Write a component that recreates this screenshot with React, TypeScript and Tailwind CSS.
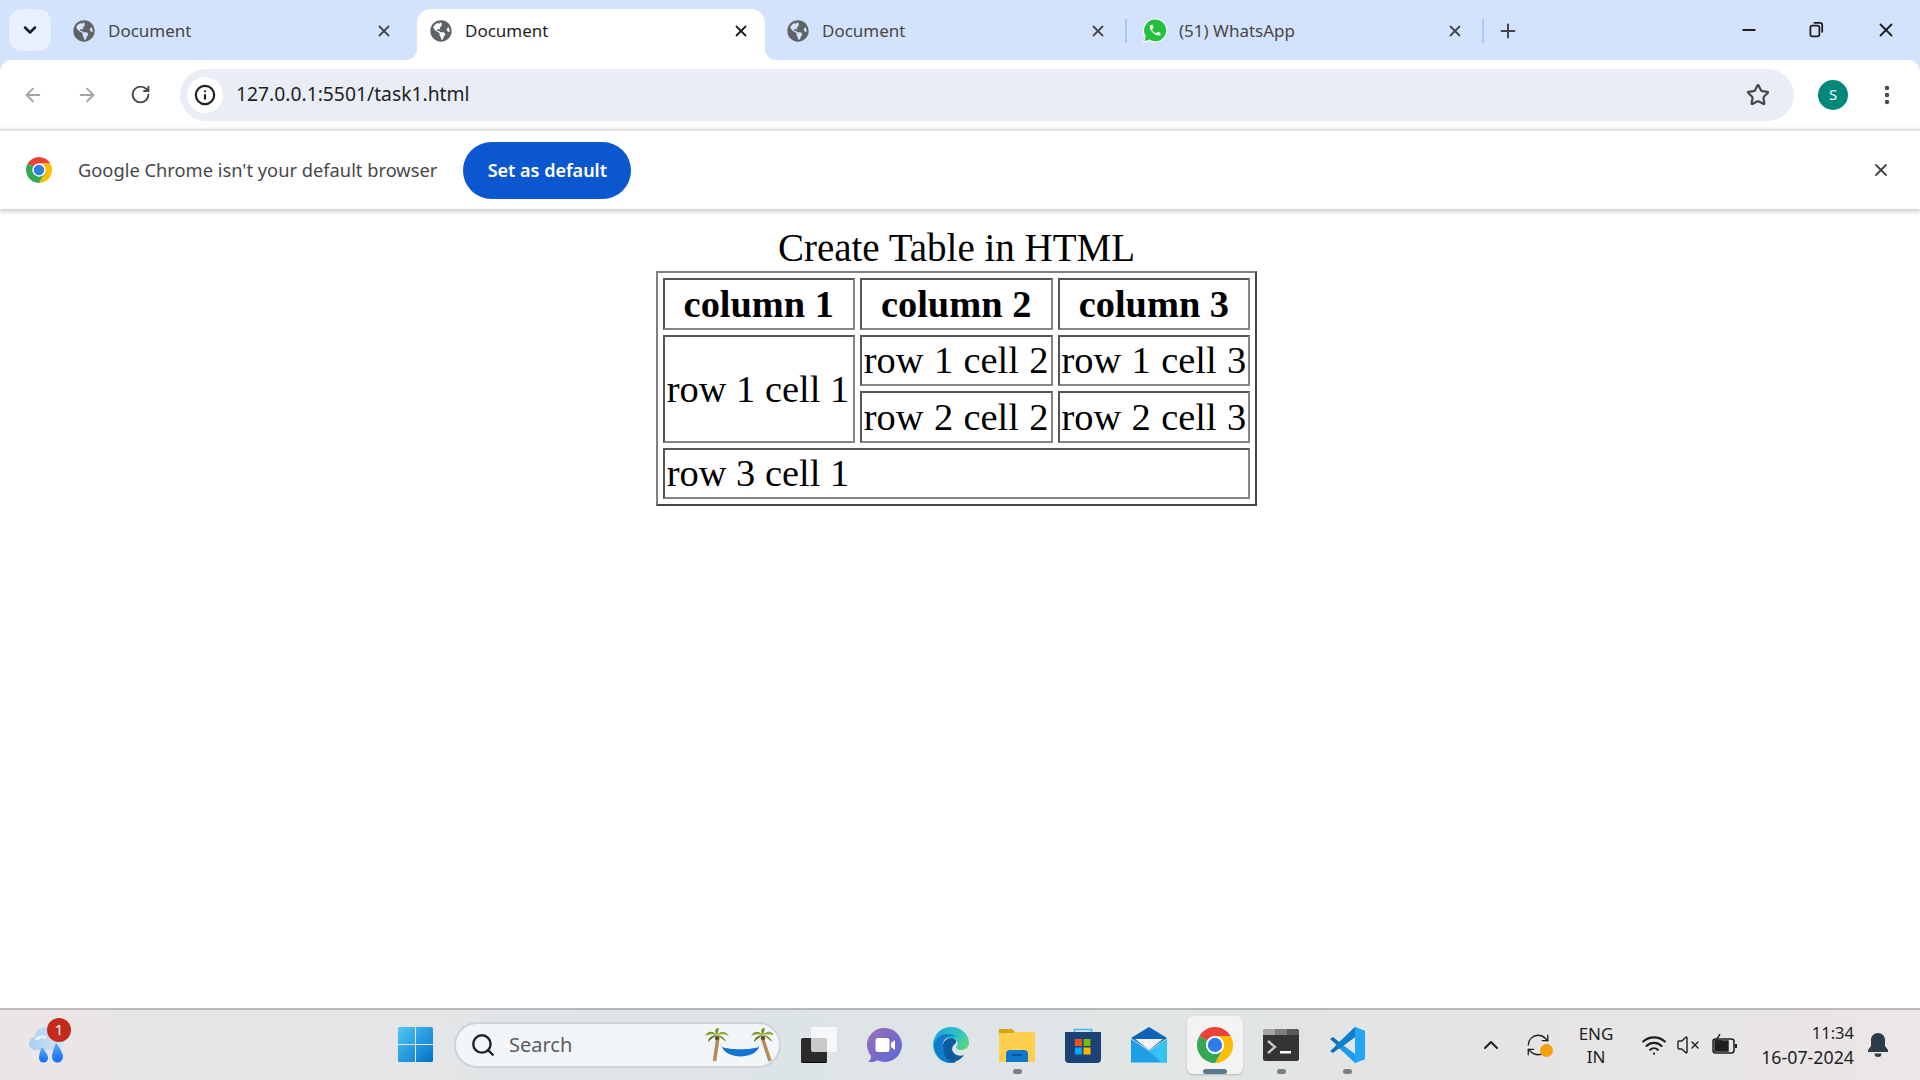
import { ArrowLeft, ArrowRight, ChevronDown, ChevronUp, EllipsisVertical, Info, Minus, Plus, RefreshCw, RotateCw, Search, Star, VolumeX, Wifi, X } from "lucide-react";
import { FaGlobeAmericas } from "react-icons/fa";

const tabs = [
  { title: "Document", active: false },
  { title: "Document", active: true },
  { title: "Document", active: false },
  { title: "(51) WhatsApp", active: false, whatsapp: true },
];

function ChromeLogo({ className }: { className?: string }) {
  return (
    <svg viewBox="4 4 40 40" className={className}>
      <path d="M6.68 14A20 20 0 0 1 41.32 14L24 14A10 10 0 0 0 15.34 19Z" fill="#ea4335" />
      <path d="M41.32 14A20 20 0 0 1 24 44L32.66 29A10 10 0 0 0 24 14Z" fill="#fbbc04" />
      <path d="M24 44A20 20 0 0 1 6.68 14L15.34 19A10 10 0 0 0 32.66 29Z" fill="#34a853" />
      <circle cx="24" cy="24" r="10" fill="#fff" />
      <circle cx="24" cy="24" r="8" fill="#2f7de9" />
    </svg>
  );
}

function WhatsAppIcon() {
  return (
    <svg viewBox="1 1 22 23" className="h-[26px] w-[24px] shrink-0">
      <path d="M12 1a11 11 0 0 0-9.400 16.600L1 23.500l5.600-2A11 11 0 1 0 12 1z" fill="#fff" />
      <path d="M12 2a10 10 0 0 0-8.500 15.300L2.400 22l4.400-1.600A10 10 0 1 0 12 2z" fill="#25c03f" />
      <path
        d="M6.6 10.8c1.4 2.8 3.8 5.1 6.6 6.6l2.2-2.2c.3-.3.7-.4 1-.2 1.1.4 2.3.6 3.6.6.6 0 1 .4 1 1V20c0 .6-.4 1-1 1C10.6 21 3 13.4 3 4c0-.6.4-1 1-1h3.5c.6 0 1 .4 1 1 0 1.3.2 2.5.6 3.6.1.3 0 .7-.2 1l-2.3 2.2z"
        fill="#fff"
        transform="translate(5.6 5.4) scale(.54)"
      />
    </svg>
  );
}

function Tab({ title, active, whatsapp }: { title: string; active: boolean; whatsapp?: boolean }) {
  return (
    <div
      className={`relative flex h-[51px] w-[348px] shrink-0 items-center rounded-t-[14px] pl-[13px] pr-[15px] pb-[8px] ${
        active ? "bg-white text-[#1f1f1f]" : "text-[#474747]"
      }`}
    >
      {active ? (
        <>
          <span className="absolute bottom-0 left-[-12px] h-[12px] w-[12px] bg-[radial-gradient(circle_at_0_0,transparent_12px,white_12.5px)]" />
          <span className="absolute bottom-0 right-[-12px] h-[12px] w-[12px] bg-[radial-gradient(circle_at_100%_0,transparent_12px,white_12.5px)]" />
        </>
      ) : null}
      {whatsapp ? <span className="absolute left-[-6px] top-[10px] h-[24px] w-[2px] bg-[#a8c7fa]" /> : null}
      <span className="flex w-[22px] justify-center">
        {whatsapp ? <WhatsAppIcon /> : <FaGlobeAmericas className="h-[22px] w-[22px] text-[#5f6368]" />}
      </span>
      <span className="ml-[13px] flex-1 text-[17px]">{title}</span>
      <X className="h-[18px] w-[18px]" strokeWidth={2.4} />
    </div>
  );
}

function TabStrip() {
  return (
    <div className="flex h-[60px] items-end bg-[#d3e3fd] pl-[9px]">
      <div className="mb-[9px] flex h-[42px] w-[42px] shrink-0 items-center justify-center rounded-[13px] bg-[#e9f0fe]">
        <ChevronDown className="h-[20px] w-[20px] text-[#1f1f1f]" strokeWidth={3} />
      </div>
      <div className="ml-[9px] flex gap-[9px]">
        {tabs.map((tab, i) => (
          <Tab key={i} {...tab} />
        ))}
      </div>
      <div className="mb-[15px] ml-[3px] flex h-[28px] items-center">
        <span className="h-[24px] w-[2px] bg-[#a8c7fa]" />
        <Plus className="ml-[13px] h-[22px] w-[22px] text-[#474747]" strokeWidth={2.2} />
      </div>
      <div className="mb-[19px] ml-auto flex items-center text-[#1f1f1f]">
        <Minus className="h-[20px] w-[20px]" strokeWidth={2.2} />
        <svg viewBox="0 0 16 16" className="ml-[48px] h-[18px] w-[18px] -translate-y-[1px]" fill="none" stroke="currentColor" strokeWidth="1.6">
          <rect x="3" y="5" width="8" height="9.5" rx="1.6" />
          <path d="M6 2.5h5.5A2 2 0 0 1 13.5 4.5V11" />
        </svg>
        <X className="ml-[50px] mr-[23px] h-[22px] w-[22px]" strokeWidth={2} />
      </div>
    </div>
  );
}

function Toolbar() {
  return (
    <div className="bg-[#d3e3fd]">
      <div className="flex h-[69px] items-center rounded-t-[12px] bg-white pl-[22px] pr-[21px]">
        <ArrowLeft className="h-[22px] w-[22px] text-[#a3a3a3]" strokeWidth={2} />
        <ArrowRight className="ml-[32px] h-[22px] w-[22px] text-[#a3a3a3]" strokeWidth={2} />
        <RotateCw className="ml-[32px] h-[21px] w-[21px] text-[#474747]" strokeWidth={2.2} />
        <div className="ml-[29px] flex h-[52px] flex-1 items-center rounded-full bg-[#e9eef6] pl-[7px] pr-[24px]">
          <div className="flex h-[36px] w-[36px] items-center justify-center rounded-full bg-white">
            <Info className="h-[22px] w-[22px] text-[#1f1f1f]" strokeWidth={2.4} />
          </div>
          <span className="ml-[13px] flex-1 text-[19.3px] text-[#1f1f1f]">127.0.0.1:5501/task1.html</span>
          <Star className="h-[24px] w-[24px] text-[#474747]" strokeWidth={2.2} />
        </div>
        <div className="ml-[24px] flex h-[30px] w-[30px] items-center justify-center rounded-full bg-[#00897b] text-[15px] text-white">
          S
        </div>
        <EllipsisVertical className="ml-[27px] h-[24px] w-[24px] text-[#474747]" strokeWidth={2.4} />
      </div>
    </div>
  );
}

function InfoBar() {
  return (
    <div className="relative z-10 flex h-[80px] items-center border-t-2 border-[#e3e3e3] bg-white pl-[26px] pr-[29px] shadow-[0_2px_5px_rgba(0,0,0,0.25)]">
      <ChromeLogo className="h-[26px] w-[26px]" />
      <span className="ml-[26px] text-[18.3px] text-[#474747]">Google Chrome isn't your default browser</span>
      <button
        type="button"
        className="ml-[26px] flex h-[57px] w-[168px] items-center justify-center rounded-full bg-[#0b57d0] text-[18px] font-semibold text-white"
      >
        Set as default
      </button>
      <X className="ml-auto h-[20px] w-[20px] text-[#474747]" strokeWidth={2.2} />
    </div>
  );
}

const cellBorder =
  "whitespace-nowrap border-[2.5px] border-t-[#555555] border-l-[#555555] border-b-[#858585] border-r-[#858585] px-[2px] py-0 leading-[44px]";
const wideCell = `${cellBorder} [word-spacing:0.8px]`;

function PageTable() {
  return (
    <div className="flex flex-1 justify-center bg-white pt-[17px] pr-[7px] font-['Liberation_Serif',serif] text-[38.4px] text-black">
      <table className="h-fit self-start border-separate border-spacing-[5px] border-2 border-t-[#808080] border-l-[#808080] border-b-[#444444] border-r-[#444444]">
        <caption className="h-[45px] text-[39px] leading-[44px]">Create Table in HTML</caption>
        <tbody>
          <tr className="h-[51.5px]">
            <th className={`${cellBorder} w-[192px]`}>column 1</th>
            <th className={`${cellBorder} w-[192px]`}>column 2</th>
            <th className={`${cellBorder} w-[192px]`}>column 3</th>
          </tr>
          <tr className="h-[51.5px]">
            <td rowSpan={2} className={cellBorder}>row 1 cell 1</td>
            <td className={wideCell}>row 1 cell 2</td>
            <td className={wideCell}>row 1 cell 3</td>
          </tr>
          <tr className="h-[51.5px]">
            <td className={wideCell}>row 2 cell 2</td>
            <td className={wideCell}>row 2 cell 3</td>
          </tr>
          <tr className="h-[51.5px]">
            <td colSpan={3} className={cellBorder}>row 3 cell 1</td>
          </tr>
        </tbody>
      </table>
    </div>
  );
}

function WeatherIcon() {
  return (
    <div className="relative h-[48px] w-[40px]">
      <svg viewBox="0 0 40 48" className="absolute inset-0">
        <defs>
          <linearGradient id="drop" x1="0" y1="0" x2="0" y2="1">
            <stop offset="0" stopColor="#5aa9f5" />
            <stop offset="1" stopColor="#0f6cff" />
          </linearGradient>
          <linearGradient id="cloud" x1="0" y1="0" x2="1" y2="0">
            <stop offset="0" stopColor="#a9cdf3" />
            <stop offset="1" stopColor="#d5e6f8" />
          </linearGradient>
        </defs>
        <path d="M9 29a6.500 6.500 0 0 1-1-13 10 10 0 0 1 19-4 8.500 8.500 0 0 1 3 17z" fill="url(#cloud)" />
        <path d="M9 19c3-4 7-4 10-2" stroke="#eaf3fd" strokeWidth="3" fill="none" />
        <path d="M15 26c3 4 6 8 6 11a4.500 4.500 0 0 1-9 0c0-3 1-7 3-11z" fill="url(#drop)" />
        <path d="M29 22c4 5 7 10 7 14a5.500 5.500 0 0 1-11 0c0-4 2-9 4-14z" fill="url(#drop)" />
      </svg>
      <span className="absolute right-[-4px] top-[-3px] flex h-[24px] w-[24px] items-center justify-center rounded-full bg-[#c42b1c] text-[15px] text-white">
        1
      </span>
    </div>
  );
}

function PalmCrown({ x }: { x: number }) {
  return (
    <g transform={`translate(${x} 7)`}>
      <path d="M0 0C-5-5-9-4-12 1c4-2 8-2 12-1z" fill="#7f9a25" />
      <path d="M0 0C-3-4-2-7 2-7 1-4 1-2 0 0z" fill="#6f8f1f" />
      <path d="M0 0c4-5 9-4 12 1-4-2-8-2-12-1z" fill="#93a92f" />
      <path d="M0 0c-5 0-9 3-9 7 3-3 6-5 9-7z" fill="#5f7d1b" />
      <path d="M0 0c4 0 8 3 9 7-3-3-6-5-9-7z" fill="#6f8f1f" />
      <circle cx="0" cy="3" r="2.200" fill="#6b4a26" />
    </g>
  );
}

function HammockIcon() {
  return (
    <svg viewBox="0 0 68 34" className="h-[34px] w-[68px]">
      <path d="M13 9L9.500 33M57 9l8 24" stroke="#b38a57" strokeWidth="3.500" fill="none" />
      <PalmCrown x={12} />
      <PalmCrown x={58} />
      <path d="M14 14l4 6M57 14l-4 6" stroke="#dcebf5" strokeWidth="1.500" />
      <path d="M17 19C25 22 45 22 54 19 50 31 22 32 17 19z" fill="#1274cf" />
    </svg>
  );
}

function TaskViewIcon() {
  return (
    <div className="relative h-[36px] w-[36px]">
      <div className="absolute bottom-0 left-0 h-[25px] w-[26px] rounded-[2px] bg-[#2b2b2b] shadow-[inset_0_-1px_0_#000]" />
      <div className="absolute right-0 top-0 h-[25px] w-[26px] rounded-[2px] bg-white/75" />
    </div>
  );
}

function ChatIcon() {
  return (
    <svg viewBox="0 0 36 36" className="h-[36px] w-[36px]">
      <defs>
        <linearGradient id="chat" x1="0" y1="0" x2="1" y2="1">
          <stop offset="0" stopColor="#9b6fb8" />
          <stop offset="1" stopColor="#5a67d8" />
        </linearGradient>
      </defs>
      <path d="M18 1a17 17 0 1 1-7.500 32.300C8 35 4 35.300 1 35c2-1.500 3-3.500 3-6A17 17 0 0 1 18 1z" fill="url(#chat)" />
      <rect x="8.500" y="11" width="14" height="14" rx="2.500" fill="#fff" />
      <path d="M24 16l4-3v10l-4-3z" fill="#fff" />
    </svg>
  );
}

function EdgeIcon() {
  return (
    <svg viewBox="0 0 36 36" className="h-[36px] w-[36px]">
      <defs>
        <linearGradient id="edge" x1="0" y1="0" x2="1" y2=".7">
          <stop offset="0" stopColor="#1b9de2" />
          <stop offset=".6" stopColor="#2fc6c0" />
          <stop offset="1" stopColor="#6fdc5b" />
        </linearGradient>
      </defs>
      <path d="M18 0c10 0 18 7 18 16 0 4-3 7-8 7-3 0-5-1-5-3 3-2 2-8-4-9C8 10 4 20 10 29c2 3 6 6 13 6-2 1-4 1-5 1C8 36 0 28 0 18S8 0 18 0z" fill="url(#edge)" />
      <path d="M1 17c2-7 8-10 13-10 6 0 9 3 9 3-6-2-13 0-13 9 0 8 7 14 13 16-2 1-3 1-5 1C8 36 1 28 1 17z" fill="#0f7cc7" />
      <path d="M10 19c0-5 4-8 8-8 3 0 6 2 5 5-3 2-5 5-3 9 2 3 7 5 11 3-3 4-7 7-12 7-6-1-9-9-9-16z" fill="#0d5aa0" />
    </svg>
  );
}

function FolderIcon() {
  return (
    <svg viewBox="0 0 36 36" className="h-[36px] w-[36px]">
      <path d="M0 2h13l4 4H36v4H0z" fill="#dba10b" />
      <path d="M0 6h13l4-1h19v30H0z" fill="#ffcf4d" />
      <path d="M7 35V27a4 4 0 0 1 4-4h14a4 4 0 0 1 4 4v8z" fill="#0f78cd" />
      <path d="M13 28h10" stroke="#0a4f8c" strokeWidth="1.600" />
    </svg>
  );
}

function StoreIcon() {
  return (
    <svg viewBox="0 0 36 36" className="h-[36px] w-[36px]">
      <path d="M9.500 9V2.500h17V9" fill="none" stroke="#3cbcf0" strokeWidth="1.600" />
      <path d="M0 5h36v27a4 4 0 0 1-4 4H4a4 4 0 0 1-4-4z" fill="#1c4377" />
      <rect x="10" y="12" width="7" height="7" fill="#f25022" />
      <rect x="18.500" y="12" width="7" height="7" fill="#7fba00" />
      <rect x="10" y="20.500" width="7" height="7" fill="#05a6f0" />
      <rect x="18.500" y="20.500" width="7" height="7" fill="#ffb900" />
    </svg>
  );
}

function MailIcon() {
  return (
    <svg viewBox="0 0 36 36" className="h-[36px] w-[36px]">
      <path d="M0 11L18 0l18 11-18 12z" fill="#0d63b5" />
      <path d="M4 12h28L18 23z" fill="#f2f2f2" />
      <path d="M0 12l18 12 18-12v23.500H0z" fill="#1d9ee8" />
      <path d="M36 12v23.500H30L18 24z" fill="#37c3f2" />
    </svg>
  );
}

function TerminalIcon() {
  return (
    <svg viewBox="0 0 36 32" className="h-[32px] w-[36px]">
      <rect width="36" height="32" rx="2.500" fill="#343434" />
      <path d="M0 2.500A2.500 2.500 0 0 1 2.500 0H12v6H0z" fill="#a6a6a6" />
      <rect x="12" width="12" height="6" fill="#7f7f7f" />
      <path d="M24 0h9.500A2.500 2.500 0 0 1 36 2.500V6H24z" fill="#5a5a5a" />
      <path d="M5 12l7 6-7 6" fill="none" stroke="#c8c8c8" strokeWidth="2.400" />
      <rect x="17" y="22" width="11" height="2.500" fill="#fff" />
    </svg>
  );
}

function VsCodeIcon() {
  return (
    <svg viewBox="0 0 36 36" className="h-[36px] w-[36px]">
      <path d="M1 12l3-2 10 8-10 8-3-2 7-6z" fill="#0a72b5" />
      <path d="M26 0l10 4v28l-10 4-16-15 4-3 12 9V10L14 19l-4-3z" fill="#1f9cf0" />
      <path d="M26 0l10 4v28l-10 4z" fill="#24a6f5" />
      <path d="M26 10L10 22l-4-3L26 0z" fill="#0f7fcb" />
    </svg>
  );
}

const apps = [
  { icon: <TaskViewIcon /> },
  { icon: <ChatIcon /> },
  { icon: <EdgeIcon /> },
  { icon: <FolderIcon />, open: true },
  { icon: <StoreIcon /> },
  { icon: <MailIcon /> },
  { icon: <ChromeLogo className="h-[36px] w-[36px]" />, focused: true },
  { icon: <TerminalIcon />, open: true },
  { icon: <VsCodeIcon />, open: true },
];

function Taskbar() {
  return (
    <div className="flex h-[72px] shrink-0 items-center border-t-2 border-[#b9b9b9] bg-[linear-gradient(90deg,#ebe6e6_0%,#dde4e7_40%,#dfe5e6_55%,#e4e4e3_75%,#ebe6e8_100%)] pb-[1px] font-['Noto_Sans',sans-serif]">
      <div className="w-[398px] pl-[27px]">
        <WeatherIcon />
      </div>
      <svg viewBox="0 0 35 35" className="h-[35px] w-[35px]">
        <defs>
          <linearGradient id="win" x1="0" y1="0" x2="1" y2="1">
            <stop offset="0" stopColor="#52c7f7" />
            <stop offset="1" stopColor="#0071c9" />
          </linearGradient>
        </defs>
        <path d="M0 1.500A1.500 1.500 0 0 1 1.500 0H17v17H0zM18 0h15.500A1.500 1.500 0 0 1 35 1.500V17H18zM0 18h17v17H1.500A1.500 1.500 0 0 1 0 33.500zM18 18h17v15.500a1.500 1.500 0 0 1-1.500 1.500H18z" fill="url(#win)" />
      </svg>
      <div className="ml-[21px] flex h-[46px] w-[327px] items-center rounded-full border-2 border-[#cdd4d8] bg-[#f3f6f8] pl-[14px] pr-[6px]">
        <Search className="h-[26px] w-[26px] text-[#222222]" strokeWidth={2.2} />
        <span className="ml-[13px] flex-1 text-[20px] text-[#5c5c5c]">Search</span>
        <HammockIcon />
      </div>
      <div className="ml-[5px] flex">
        {apps.map((app, i) => (
          <div key={i} className="relative flex h-[58px] w-[66px] items-center justify-center">
            {app.focused ? (
              <span className="absolute inset-x-[5px] inset-y-0 rounded-[6px] bg-[#f3f3f3] shadow-[0_1px_2px_rgba(0,0,0,0.2)]" />
            ) : null}
            <span className="relative flex">{app.icon}</span>
            {app.open ? <span className="absolute bottom-[0px] h-[5px] w-[9px] rounded-full bg-[#7b7f82]" /> : null}
            {app.focused ? <span className="absolute bottom-[0px] h-[5px] w-[24px] rounded-full bg-[#5d7a8c]" /> : null}
          </div>
        ))}
      </div>
      <div className="ml-[99px] flex items-center text-[#1f1f1f]">
        <ChevronUp className="h-[24px] w-[24px]" strokeWidth={2} />
        <div className="relative ml-[22px] h-[26px] w-[26px]">
          <RefreshCw className="h-[26px] w-[26px]" strokeWidth={1.2} />
          <span className="absolute bottom-[1px] right-[-2px] h-[13px] w-[13px] rounded-full bg-[#f59f0b]" />
        </div>
        <div className="ml-[23px] w-[44px] text-center text-[17px] leading-[23px]">
          <div>ENG</div>
          <div>IN</div>
        </div>
        <Wifi className="ml-[23px] h-[26px] w-[26px]" strokeWidth={2} />
        <VolumeX className="ml-[9px] h-[24px] w-[24px]" strokeWidth={1.4} />
        <svg viewBox="0 0 26 22" className="ml-[12px] h-[22px] w-[26px]" fill="none" stroke="currentColor" strokeWidth="1.500">
          <rect x="1" y="5" width="21" height="14" rx="2.500" />
          <rect x="3" y="7" width="13" height="10" fill="currentColor" />
          <path d="M24 10v4" strokeWidth="2" />
          <path d="M8 0L4 7h5l-3 6" />
        </svg>
        <div className="ml-[22px] w-[94px] whitespace-nowrap text-right text-[17.800px] leading-[25px]">
          <div className="text-[16.500px]">11:34</div>
          <div>16-07-2024</div>
        </div>
        <svg viewBox="0 0 20 24" className="ml-[14px] h-[24px] w-[20px]" fill="#2d3b4a">
          <path d="M10 0c-4 0-7 3-7 7v6l-3 4v2h20v-2l-3-4V7c0-4-3-7-7-7z" />
          <path d="M6.500 20.500h7a3.500 3.500 0 0 1-7 0z" />
        </svg>
      </div>
    </div>
  );
}

export default function App() {
  return (
    <div className="flex h-screen w-[1920px] flex-col overflow-hidden bg-white font-['Noto_Sans',sans-serif]">
      <TabStrip />
      <Toolbar />
      <InfoBar />
      <PageTable />
      <Taskbar />
    </div>
  );
}
